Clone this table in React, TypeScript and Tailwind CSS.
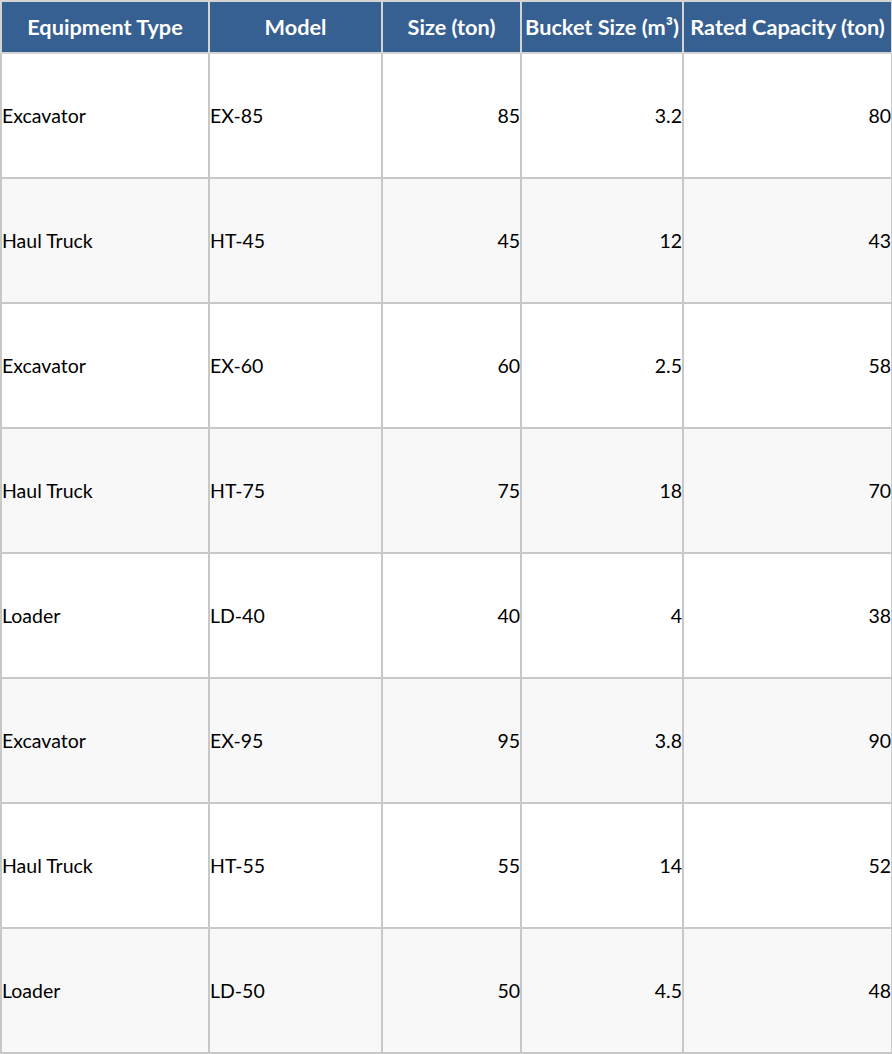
const rows = [
  ["Excavator", "EX-85", "85", "3.2", "80"],
  ["Haul Truck", "HT-45", "45", "12", "43"],
  ["Excavator", "EX-60", "60", "2.5", "58"],
  ["Haul Truck", "HT-75", "75", "18", "70"],
  ["Loader", "LD-40", "40", "4", "38"],
  ["Excavator", "EX-95", "95", "3.8", "90"],
  ["Haul Truck", "HT-55", "55", "14", "52"],
  ["Loader", "LD-50", "50", "4.5", "48"],
];

const headers = ["Equipment Type", "Model", "Size (ton)", "Bucket Size (m³)", "Rated Capacity (ton)"];
const widths = ["w-[208px]", "w-[173px]", "w-[139px]", "w-[162px]", "w-[209px]"];

export default function App() {
  return (
    <div className="w-[892px] bg-white" style={{ fontFamily: "Lato, 'Open Sans', sans-serif" }}>
      <table className="table-fixed border-collapse w-[891px]">
        <thead>
          <tr className="h-[52px]">
            {headers.map((h, i) => (
              <th
                key={h}
                className={`${widths[i]} bg-[#366092] text-white font-bold text-[21.7px] text-center border-2 border-[#d4d4d4] px-0 whitespace-nowrap`}
              >
                {h}
              </th>
            ))}
          </tr>
        </thead>
        <tbody>
          {rows.map((r, ri) => (
            <tr key={ri} className={`h-[125px] ${ri % 2 === 1 ? "bg-[#f8f8f8]" : "bg-white"}`}>
              {r.map((c, ci) => (
                <td
                  key={ci}
                  className={`border-2 border-[#c8c8c8] text-[19.5px] text-black ${ci < 2 ? "text-left pl-0" : "text-right pr-0"}`}
                >
                  {c}
                </td>
              ))}
            </tr>
          ))}
        </tbody>
      </table>
    </div>
  );
}
